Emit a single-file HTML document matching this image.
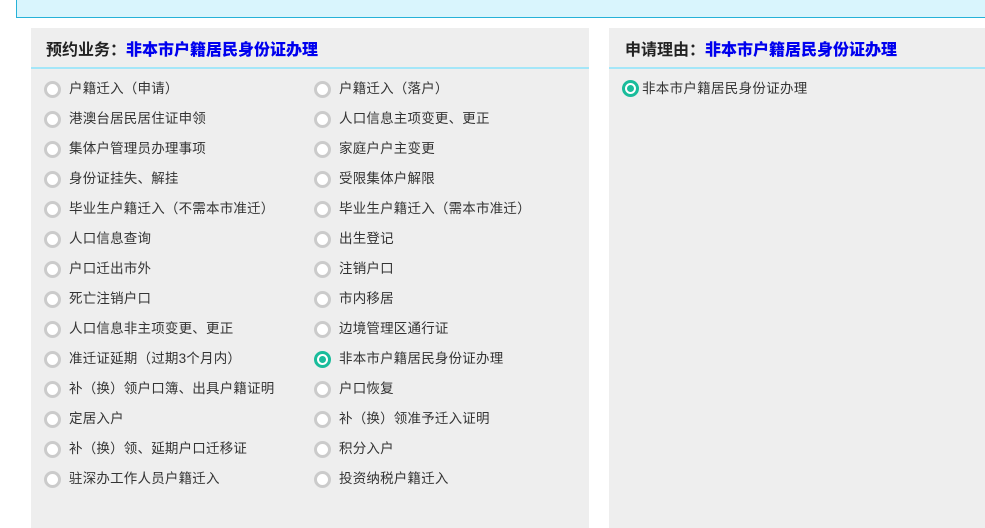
<!DOCTYPE html>
<html><head><meta charset="utf-8"><style>
body{margin:0;width:985px;height:518px;background:#fff;position:relative;overflow:hidden;font-family:"Liberation Sans","Microsoft YaHei","Noto Sans CJK SC",sans-serif;}
.top{position:absolute;left:16px;top:-2px;width:980px;height:18px;background:#d9f5fd;border:1px solid #27b2d8;}
.panel{position:absolute;top:28px;height:500px;background:#eeeeee;}
.hd{position:absolute;left:0;right:0;top:0;height:39px;border-bottom:2px solid #a4e6f8;}
.hd span{position:absolute;top:8px;font-size:16px;font-weight:bold;color:#222;white-space:nowrap;}
.hd b{color:#0000ee;}
.it{position:absolute;font-size:13.5px;letter-spacing:0.2px;color:#333;white-space:nowrap;line-height:16px;}
.r{position:absolute;width:11px;height:11px;border:3px solid #cbcbcb;border-radius:50%;background:#fff;}
.r.on{border-color:#19bc9b;}
.r.on:after{content:"";position:absolute;left:2px;top:2px;width:7px;height:7px;border-radius:50%;background:#19bc9b;}
</style></head><body>
<div class="top"></div>
<div class="panel" style="left:31px;width:558px;">
<div class="hd"><span style="left:15px">预约业务：<b>非本市户籍居民身份证办理</b></span></div>
</div>
<div class="panel" style="left:609px;width:380px;">
<div class="hd"><span style="left:16px">申请理由：<b>非本市户籍居民身份证办理</b></span></div>
</div>
<div id="list"></div>
<div class="r on" style="left:622px;top:80px"></div>
<div class="it" style="left:642px;top:81px;letter-spacing:0.3px">非本市户籍居民身份证办理</div>
<script>
var a=["户籍迁入（申请）","户籍迁入（落户）","港澳台居民居住证申领","人口信息主项变更、更正","集体户管理员办理事项","家庭户户主变更","身份证挂失、解挂","受限集体户解限","毕业生户籍迁入（不需本市准迁）","毕业生户籍迁入（需本市准迁）","人口信息查询","出生登记","户口迁出市外","注销户口","死亡注销户口","市内移居","人口信息非主项变更、更正","边境管理区通行证","准迁证延期（过期3个月内）","非本市户籍居民身份证办理","补（换）领户口簿、出具户籍证明","户口恢复","定居入户","补（换）领准予迁入证明","补（换）领、延期户口迁移证","积分入户","驻深办工作人员户籍迁入","投资纳税户籍迁入"];
var h="";
for(var i=0;i<a.length;i++){var row=Math.floor(i/2),c=i%2;var y=89+row*30;var rx=c?314:44,tx=c?339:69;
h+='<div class="r'+(i==19?' on':'')+'" style="left:'+rx+'px;top:'+(y-8)+'px"></div><div class="it" style="left:'+tx+'px;top:'+(y-8)+'px">'+a[i]+'</div>';}
document.getElementById("list").innerHTML=h;
</script>
</body></html>
